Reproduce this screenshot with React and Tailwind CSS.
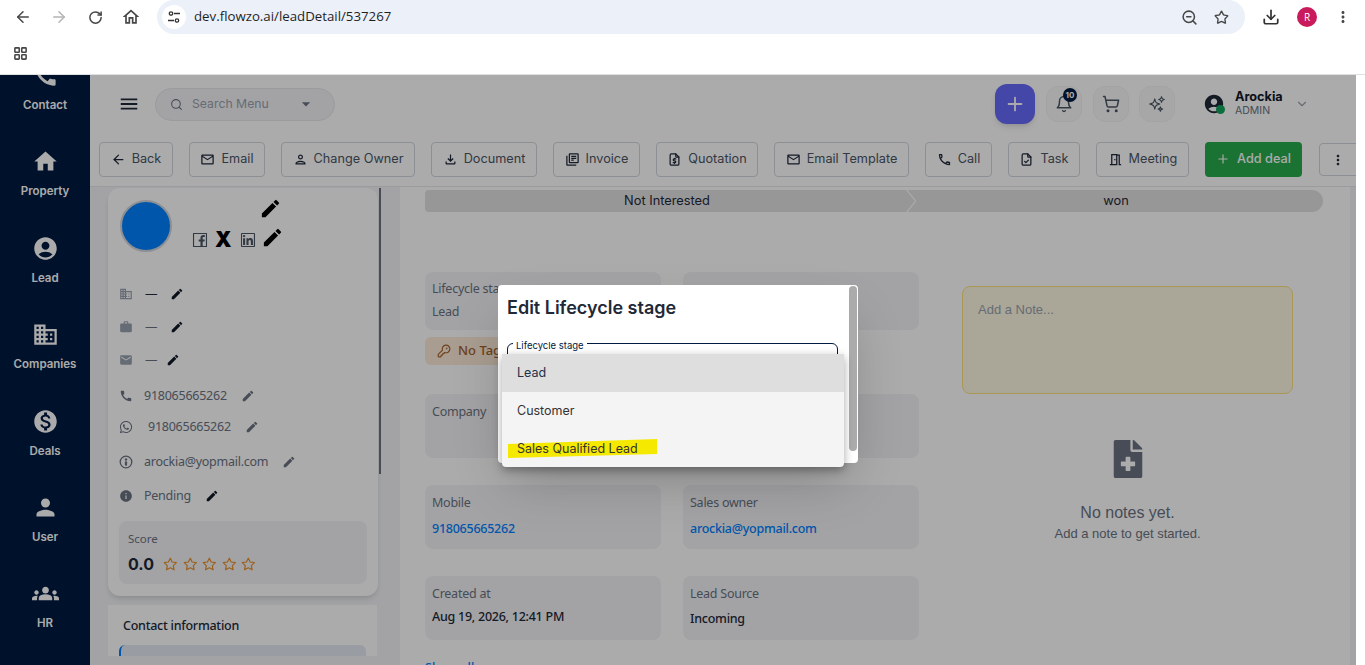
import React from "react";
import { LuArrowLeft, LuArrowRight, LuRotateCw, LuZoomOut, LuStar, LuLayoutGrid, LuSearch, LuBell, LuShoppingCart, LuChevronDown, LuPlus, LuKeyRound } from "react-icons/lu";
import { MdOutlineHome, MdCall, MdHome, MdAccountCircle, MdMonetizationOn, MdPerson, MdGroups, MdEdit, MdWork, MdEmail, MdInfo, MdOutlineEmail, MdOutlineFileDownload, MdOutlineLibraryBooks, MdOutlineCall, MdOutlineMeetingRoom, MdMoreVert, MdMenu, MdArrowDropDown, MdOutlinePerson, MdBusiness } from "react-icons/md";
import { FaWhatsapp, FaFileMedical } from "react-icons/fa";
import { AiOutlineFacebook, AiOutlineLinkedin } from "react-icons/ai";
import { TbFileDollar, TbFileCheck } from "react-icons/tb";
import { HiOutlineSparkles } from "react-icons/hi2";
import { FiDownload, FiStar } from "react-icons/fi";

const navItems = [
  { label: "Contact", icon: MdCall },
  { label: "Property", icon: MdHome },
  { label: "Lead", icon: MdAccountCircle },
  { label: "Companies", icon: MdBusiness },
  { label: "Deals", icon: MdMonetizationOn },
  { label: "User", icon: MdPerson },
  { label: "HR", icon: MdGroups },
];

const actions = [
  { label: "Back", icon: LuArrowLeft, width: "w-[74px]" },
  { label: "Email", icon: MdOutlineEmail, width: "w-[76px]" },
  { label: "Change Owner", icon: MdOutlinePerson, width: "w-[134px]" },
  { label: "Document", icon: MdOutlineFileDownload, width: "w-[106px]" },
  { label: "Invoice", icon: MdOutlineLibraryBooks, width: "w-[87px]" },
  { label: "Quotation", icon: TbFileDollar, width: "w-[102px]" },
  { label: "Email Template", icon: MdOutlineEmail, width: "w-[135px]" },
  { label: "Call", icon: MdOutlineCall, width: "w-[67px]" },
  { label: "Task", icon: TbFileCheck, width: "w-[72px]" },
  { label: "Meeting", icon: MdOutlineMeetingRoom, width: "w-[93px]" },
];

// little circle icon next to the email row
const MailCircle = ({ size, className }) => (
  <svg width={size} height={size} viewBox="0 0 14 14" fill="none" className={className}>
    <circle cx="7" cy="7" r="5.8" stroke="currentColor" strokeWidth="1.3" />
    <circle cx="7" cy="4.5" r="1.2" fill="currentColor" />
    <rect x="5.9" y="6.2" width="2.2" height="4.6" rx="1" fill="currentColor" />
  </svg>
);

const details = [
  { id: "company", icon: MdBusiness, text: "—", gap: "ml-[13px]", row: "mt-[32px]", left: "ml-[12px]", tint: "text-gray-400", textTint: "text-gray-800", pen: "text-gray-900" },
  { id: "job", icon: MdWork, text: "—", gap: "ml-[13px]", row: "mt-[13px]", left: "ml-[12px]", tint: "text-gray-400", textTint: "text-gray-500", pen: "text-gray-900" },
  { id: "mail", icon: MdEmail, text: "—", gap: "ml-[9px]", row: "mt-[13px]", left: "ml-[12px]", tint: "text-gray-400", textTint: "text-gray-500", pen: "text-gray-900" },
  { id: "phone", icon: MdCall, text: "918065665262", gap: "ml-[14px]", row: "mt-[15px]", left: "ml-[11px]", tint: "text-gray-500", textTint: "text-gray-500", pen: "text-gray-500" },
  { id: "whatsapp", icon: FaWhatsapp, text: "918065665262", gap: "ml-[14px]", row: "mt-[12px]", left: "ml-[15px]", tint: "text-gray-500", textTint: "text-gray-500", pen: "text-gray-500" },
  { id: "email", icon: MailCircle, text: "arockia@yopmail.com", gap: "ml-[14px]", row: "mt-[15px]", left: "ml-[11px]", tint: "text-gray-500", textTint: "text-gray-500", pen: "text-gray-500" },
  { id: "status", icon: MdInfo, text: "Pending", gap: "ml-[14px]", row: "mt-[14px]", left: "ml-[11px]", tint: "text-gray-500", textTint: "text-gray-500", pen: "text-gray-900" },
];

const Field = ({ label, value, valueClass = "text-gray-500", gap = "mt-[5px]", height = "h-[64px]", top = "pt-[9px]" }) => (
  <div className={`${height} ${top} w-[236px] rounded-lg bg-gray-100 px-[7px]`}>
    <div className="text-[12.5px] leading-[18px] tracking-[-0.02em] text-gray-500">{label}</div>
    <div className={`${gap} text-[12.5px] leading-[18px] tracking-[-0.02em] ${valueClass}`}>{value}</div>
  </div>
);

const ChromeBar = () => (
  <div className="h-[75px] border-b border-[#e0e0e0] bg-white" style={{ fontFamily: "'Open Sans', sans-serif" }}>
    <div className="flex h-[34px] items-center pl-[5px] text-[#474747]">
      <div className="flex w-[36px] justify-center"><LuArrowLeft size={18} /></div>
      <div className="flex w-[36px] justify-center text-[#b4b4b4]"><LuArrowRight size={18} /></div>
      <div className="flex w-[36px] justify-center"><LuRotateCw size={15} strokeWidth={2.4} /></div>
      <div className="flex w-[36px] justify-center"><MdOutlineHome size={20} /></div>
      <div className="ml-[8px] flex h-[34px] w-[1088px] items-center rounded-[17px] bg-[#ebf0f9] pl-[5px]">
        <div className="flex h-[24px] w-[24px] items-center justify-center rounded-full bg-white">
          <svg width="14" height="14" viewBox="0 0 14 14" fill="none" stroke="#333" strokeWidth="1.3">
            <circle cx="4" cy="3.5" r="1.7" />
            <path d="M7 3.5h6M1 10.5h6" />
            <circle cx="10" cy="10.5" r="1.7" />
          </svg>
        </div>
        <span className="ml-[8px] text-[13.25px] text-[#1f1f1f]">dev.flowzo.ai/leadDetail/537267</span>
        <div className="ml-auto flex items-center pr-[16px]">
          <LuZoomOut size={17} strokeWidth={2.2} />
          <LuStar size={15} strokeWidth={2.2} className="ml-[16px]" />
        </div>
      </div>
      <div className="ml-[8px] flex w-[36px] justify-center text-[#333]"><FiDownload size={18} strokeWidth={2.3} /></div>
      <div className="flex w-[36px] justify-center">
        <div className="flex h-[20px] w-[20px] items-center justify-center rounded-full bg-[#c91a5b] text-[10px] text-white">R</div>
      </div>
      <div className="flex w-[36px] justify-center"><MdMoreVert size={18} /></div>
    </div>
    <div className="pl-[13px] pt-[12px] text-[#474747]"><LuLayoutGrid size={15} strokeWidth={2.5} /></div>
  </div>
);

const Sidebar = () => (
  <div className="h-full w-[90px] shrink-0 overflow-hidden bg-[#001a41]">
    <div className="-mt-[24px]">
      {navItems.map(({ label, icon: Icon }) => (
        <div key={label} className="flex h-[86.4px] flex-col items-center pt-[11px] text-white">
          <Icon size={27} />
          <span className="mt-[8px] text-[11.5px] font-semibold leading-[17px]">{label}</span>
        </div>
      ))}
    </div>
  </div>
);

const Header = () => (
  <div className="flex h-[67px] items-center bg-white pb-[9px] text-gray-600">
    <MdMenu size={22} className="ml-[28px] text-gray-800" />
    <div className="ml-[15px] flex h-[33px] w-[180px] items-center rounded-full border border-gray-200 bg-gray-100 pl-[14px] text-gray-500">
      <LuSearch size={13} />
      <span className="ml-[9px] text-[12.25px] text-gray-400">Search Menu</span>
      <MdArrowDropDown size={20} className="ml-[27px]" />
    </div>
    <div className="ml-[660px] flex h-[40px] w-[40px] items-center justify-center rounded-xl bg-[#676bfb] text-white shadow-md">
      <LuPlus size={22} />
    </div>
    <div className="relative ml-[11px] flex h-[36px] w-[36px] items-center justify-center rounded-xl border border-gray-100 bg-gray-50">
      <LuBell size={18} />
      <span className="absolute right-[4px] top-[1px] flex h-[14px] w-[14px] items-center justify-center rounded-full bg-[#001a41] text-[8px] font-bold text-white">10</span>
    </div>
    <div className="ml-[11px] flex h-[36px] w-[36px] items-center justify-center rounded-xl border border-gray-100 bg-gray-50">
      <LuShoppingCart size={18} />
    </div>
    <div className="ml-[10px] flex h-[36px] w-[36px] items-center justify-center rounded-xl border border-gray-100 bg-gray-50">
      <HiOutlineSparkles size={18} />
    </div>
    <div className="relative ml-[28px] text-[#1f2937]">
      <MdAccountCircle size={22} />
      <span className="absolute bottom-[1px] right-[0px] h-[9px] w-[9px] rounded-full bg-[#16a35f]" />
    </div>
    <div className="ml-[10px] flex flex-col">
      <span className="text-[12.7px] font-bold leading-[14px] text-gray-900">Arockia</span>
      <span className="text-[10.5px] leading-[14px] text-gray-500">ADMIN</span>
    </div>
    <LuChevronDown size={14} className="ml-[12px] text-gray-400" />
  </div>
);

const Toolbar = () => (
  <div className="flex h-[45px] items-start gap-[16px] overflow-hidden border-b border-gray-200 bg-white pl-[9px]">
    {actions.map(({ label, icon: Icon, width }) => (
      <div key={label} className={`${width} flex h-[35px] shrink-0 items-center justify-center gap-[6px] rounded border border-gray-300 pb-[1px] text-[12.7px] text-gray-600`}>
        <Icon size={15} className="text-gray-800" />
        <span>{label}</span>
      </div>
    ))}
    <div className="flex h-[35px] w-[97px] shrink-0 items-center justify-center gap-[7px] rounded bg-[#28ac4b] pb-[1px] text-[12.7px] font-medium text-white">
      <LuPlus size={14} />
      <span>Add deal</span>
    </div>
    <div className="ml-px mt-px flex h-[33px] w-[45px] shrink-0 items-center rounded border border-gray-300 pl-[10px] text-gray-800">
      <MdMoreVert size={16} />
    </div>
  </div>
);

const ProfileCard = () => (
  <div className="relative mt-[1px] h-[408px] w-[270px] rounded-xl bg-white pl-[11px] pt-[12px] shadow-md">
    <div className="flex">
      <div className="ml-px h-[52px] w-[52px] rounded-full border-2 border-gray-300 bg-[#0080ff]" />
      <div className="ml-[19px] flex flex-col">
        <MdEdit size={23} className="ml-[68px] -mt-[3px] text-black" />
        <div className="mt-[6px] flex items-end text-gray-600">
          <AiOutlineFacebook size={18} />
          <span className="ml-[6px] text-[21px] font-black leading-[19px] text-black">X</span>
          <AiOutlineLinkedin size={18} className="ml-[7px]" />
          <MdEdit size={23} className="ml-[4px] text-black" />
        </div>
      </div>
    </div>
    <div className="mt-[18px] text-[12.5px] leading-[20px] tracking-[-0.02em]" style={{ fontFamily: "'Noto Sans', sans-serif" }}>
      {details.map(({ id, icon: Icon, text, gap, row, left, tint, textTint, pen }) => (
        <div key={id} className={`flex h-[20px] items-center ${row} ${id === "phone" ? "pt-px" : ""}`}>
          <Icon size={14} className={tint} />
          <span className={`${left} ${textTint}`}>{text}</span>
          <MdEdit size={14} className={`${gap} ${pen}`} />
        </div>
      ))}
    </div>
    <div className="mt-[15px] h-[63px] w-[248px] rounded-lg bg-gray-100 pl-[9px] pt-[10px]">
      <div className="text-[11.5px] leading-[16px] text-gray-500" style={{ fontFamily: "'Noto Sans', sans-serif" }}>Score</div>
      <div className="mt-[5px] flex items-center">
        <span className="w-[35px] text-[16px] font-bold leading-[24px] text-gray-800">0.0</span>
        <div className="flex gap-[5px] text-[#e9912d]">
          {[0, 1, 2, 3, 4].map((i) => <FiStar key={i} size={14.6} strokeWidth={2} />)}
        </div>
      </div>
    </div>
  </div>
);

const LeftColumn = () => (
  <div className="relative h-full w-[310px] shrink-0 overflow-hidden bg-gray-100 pl-[18px]">
    <ProfileCard />
    <div className="absolute left-[289px] top-[1px] h-[286px] w-[2px] bg-gray-500" />
    <div className="mt-[9px] h-[51px] w-[269px] overflow-hidden bg-white pl-[11px] pt-[12px]">
      <div className="pl-[4px] text-[12.5px] font-medium leading-[18px] tracking-[-0.02em] text-gray-800" style={{ fontFamily: "'Noto Sans', sans-serif" }}>Contact information</div>
      <div className="mt-[10px] h-[20px] w-[247px] rounded-md border-l-2 border-[#0080ff] bg-[#e5e9f2]" />
    </div>
  </div>
);

const StageBar = () => (
  <div className="mt-[3px] flex h-[22px] w-[898px] text-[12.8px] text-gray-800">
    <div className="flex w-[480px] items-center justify-center rounded-l bg-[#e2e2e2] pl-[4px]">Not Interested</div>
    <svg width="11" height="22" viewBox="0 0 11 22" className="shrink-0">
      <path d="M0 0 L1 0 L10 11 L1 22 L0 22Z" fill="#e2e2e2" />
      <path d="M11 0 L11 22 L2.5 22 L11.5 11 L2.5 0Z" fill="#e2e2e2" />
    </svg>
    <div className="flex w-[407px] items-center justify-center rounded-r-full bg-[#e2e2e2] pr-[7px]">won</div>
  </div>
);

const Fields = () => (
  <div className="mt-[60px] w-[494px]" style={{ fontFamily: "'Noto Sans', sans-serif" }}>
    <div className="flex gap-[22px]">
      <Field label="Lifecycle stage" value="Lead" height="h-[58px]" top="pt-[8px]" />
      <Field label="" value="" height="h-[58px]" top="pt-[8px]" />
    </div>
    <div className="mt-[7px] flex h-[28px] w-[100px] items-center rounded-md bg-[#fdebd8] pl-[12px] text-[13px] font-medium text-[#a5622b]">
      <LuKeyRound size={14} />
      <span className="ml-[7px]">No Tag</span>
    </div>
    <div className="mt-[29px] flex gap-[22px]">
      <Field label="Company" value="" />
      <Field label="Phone" value="" />
    </div>
    <div className="mt-[27px] flex gap-[22px]">
      <Field label="Mobile" value="918065665262" valueClass="font-medium text-[#0080ff]" gap="mt-[8px]" />
      <Field label="Sales owner" value="arockia@yopmail.com" valueClass="font-medium text-[#0080ff]" gap="mt-[8px]" />
    </div>
    <div className="mt-[27px] flex gap-[22px]">
      <Field label="Created at" value="Aug 19, 2026, 12:41 PM" valueClass="font-medium text-gray-800" />
      <Field label="Lead Source" value="Incoming" valueClass="font-medium text-gray-800" gap="mt-[7px]" />
    </div>
    <div className="mt-[19px] text-[12.5px] font-medium text-[#0080ff]">Show all</div>
  </div>
);

const Notes = () => (
  <div className="ml-[43px] w-[331px]" style={{ fontFamily: "'Liberation Sans', sans-serif" }}>
    <div className="mt-[74px] h-[108px] rounded-lg border border-[#ffe17f] bg-[#fef9e3] pl-[15px] pt-[14px] text-[13px] leading-[18px] text-gray-400">
      Add a Note...
    </div>
    <div className="mt-[46px] flex flex-col items-center text-gray-500">
      <FaFileMedical size={38} />
      <div className="mt-[25px] text-[16px] leading-[20px]">No notes yet.</div>
      <div className="mt-[2px] text-[13px] leading-[18px]">Add a note to get started.</div>
    </div>
  </div>
);

const Modal = () => (
  <div className="absolute left-[498px] top-[210px] h-[178px] w-[360px] rounded bg-white pl-[9px] pt-[11px] shadow-2xl" style={{ fontFamily: "Inter, sans-serif" }}>
    <div className="text-[18px] font-semibold leading-[24px] text-[#1f2937]">Edit Lifecycle stage</div>
    <div className="mt-[23px] h-[60px] w-[331px] rounded-md border border-[#001a41]" />
    <span className="absolute left-[15px] top-[55px] bg-white px-[3px] text-[9.5px] leading-[12px] text-[#001a41]">Lifecycle stage</span>
    <div className="absolute right-[1px] top-[1px] h-[165px] w-[8px] rounded-full bg-[#ababab]" />
    <div className="absolute left-[4px] top-[69px] h-[113px] w-[342px] rounded bg-[#f4f4f4] text-[12.5px] shadow-[0_3px_10px_rgba(0,0,0,0.35)]">
      <div className="flex h-[38px] items-center bg-[#dedede] pl-[15px] text-[#22304a]">Lead</div>
      <div className="flex h-[38px] items-center pl-[15px] text-[#333]">Customer</div>
      <div className="relative flex h-[37px] items-center pl-[15px] pt-[2px] text-[#333]">
        <svg width="150" height="19" viewBox="0 0 150 19" className="absolute left-[5px] top-[9px]">
          <polygon points="1,5 150,0 150,15 1,19" fill="#f5e900" />
        </svg>
        <span className="relative">Sales Qualified Lead</span>
      </div>
    </div>
  </div>
);

const App = () => (
  <div className="h-[665px] w-[1365px] overflow-hidden bg-white" style={{ fontFamily: "Inter, sans-serif" }}>
    <ChromeBar />
    <div className="relative flex h-[590px] w-[1356px]">
      <Sidebar />
      <div className="flex h-full w-[1266px] flex-col">
        <Header />
        <Toolbar />
        <div className="flex h-[478px]">
          <LeftColumn />
          <div className="flex w-[950px] bg-white pl-[25px]">
            <div>
              <StageBar />
              <div className="flex">
                <Fields />
                <Notes />
              </div>
            </div>
          </div>
          <div className="w-[6px] bg-gray-100" />
        </div>
      </div>
      <div className="absolute inset-0 bg-black/[0.33]" />
      <Modal />
    </div>
  </div>
);

export default App;
